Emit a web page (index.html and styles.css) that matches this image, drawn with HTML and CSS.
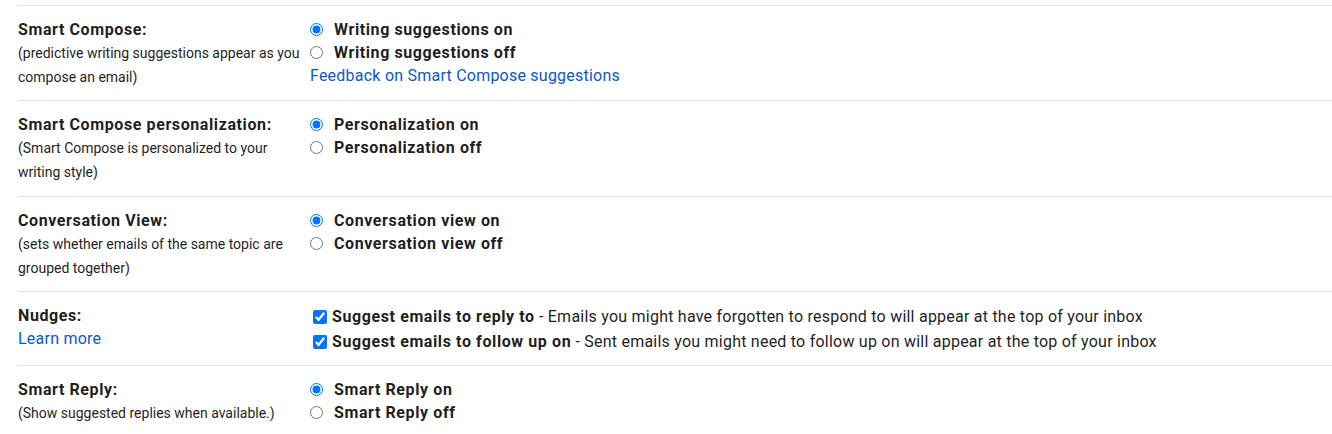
FILE: index.html
```html
<!DOCTYPE html>
<html>
<head>
<meta charset="utf-8">
<link rel="stylesheet" href="styles.css">
</head>
<body>
<div class="settings">
  <div class="row">
    <div class="label-col">
      <div class="title">Smart Compose:</div>
      <div class="desc">(predictive writing suggestions appear as you compose an email)</div>
    </div>
    <div class="opt-col">
      <label class="radio"><input type="radio" name="sc" checked><span>Writing suggestions on</span></label>
      <label class="radio"><input type="radio" name="sc"><span>Writing suggestions off</span></label>
      <a class="link line" href="#">Feedback on Smart Compose suggestions</a>
    </div>
  </div>
  <div class="row">
    <div class="label-col">
      <div class="title">Smart Compose personalization:</div>
      <div class="desc">(Smart Compose is personalized to your writing style)</div>
    </div>
    <div class="opt-col">
      <label class="radio"><input type="radio" name="scp" checked><span>Personalization on</span></label>
      <label class="radio"><input type="radio" name="scp"><span>Personalization off</span></label>
    </div>
  </div>
  <div class="row">
    <div class="label-col">
      <div class="title">Conversation View:</div>
      <div class="desc">(sets whether emails of the same topic are grouped together)</div>
    </div>
    <div class="opt-col">
      <label class="radio"><input type="radio" name="cv" checked><span>Conversation view on</span></label>
      <label class="radio"><input type="radio" name="cv"><span>Conversation view off</span></label>
    </div>
  </div>
  <div class="row">
    <div class="label-col">
      <div class="title">Nudges:</div>
      <a class="link line" href="#">Learn more</a>
    </div>
    <div class="opt-col">
      <label class="check"><input type="checkbox" checked><span><b>Suggest emails to reply to</b> - Emails you might have forgotten to respond to will appear at the top of your inbox</span></label>
      <label class="check"><input type="checkbox" checked><span><b>Suggest emails to follow up on</b> - Sent emails you might need to follow up on will appear at the top of your inbox</span></label>
    </div>
  </div>
  <div class="row">
    <div class="label-col">
      <div class="title">Smart Reply:</div>
      <div class="desc">(Show suggested replies when available.)</div>
    </div>
    <div class="opt-col">
      <label class="radio"><input type="radio" name="sr" checked><span>Smart Reply on</span></label>
      <label class="radio"><input type="radio" name="sr"><span>Smart Reply off</span></label>
    </div>
  </div>
</div>
</body>
</html>
```

FILE: styles.css
```css
html, body {
  margin: 0;
  padding: 0;
  background: #ffffff;
}
body {
  font-family: Roboto, "Liberation Sans", Arial, sans-serif;
  color: #1f1f1f;
  font-size: 16px;
}
.settings {
  margin-top: 5px;
  padding-left: 18px;
}
.row {
  display: grid;
  grid-template-columns: 292px 1fr;
  border-top: 1px solid #e3e3e3;
  padding: 12px 0 11px;
}
.row:nth-child(2) {
  padding-bottom: 12px;
}
.label-col {
  padding-right: 6px;
}
.title {
  font-weight: 700;
  font-size: 16px;
  letter-spacing: 0.6px;
  line-height: 23px;
}
.desc {
  font-size: 14px;
  line-height: 24px;
}
.link {
  color: #0b57d0;
  text-decoration: none;
  font-size: 16px;
  letter-spacing: 0.23px;
}
.line {
  display: block;
  line-height: 23px;
}
.opt-col {
  display: flex;
  flex-direction: column;
  margin-left: -5px;
}
.radio {
  display: flex;
  align-items: center;
  height: 23px;
  font-weight: 700;
  letter-spacing: 0.6px;
}
.radio input {
  margin: 0 11px 0 5px;
  width: 13px;
  height: 13px;
}
.check {
  display: flex;
  align-items: center;
  height: 25px;
  letter-spacing: 0.23px;
}
.check input {
  margin: 0 5px 0 8px;
  width: 14px;
  height: 14px;
}
.check b {
  font-weight: 700;
  letter-spacing: 0.6px;
}
.opt-col .link {
  padding-left: 5px;
}
```
